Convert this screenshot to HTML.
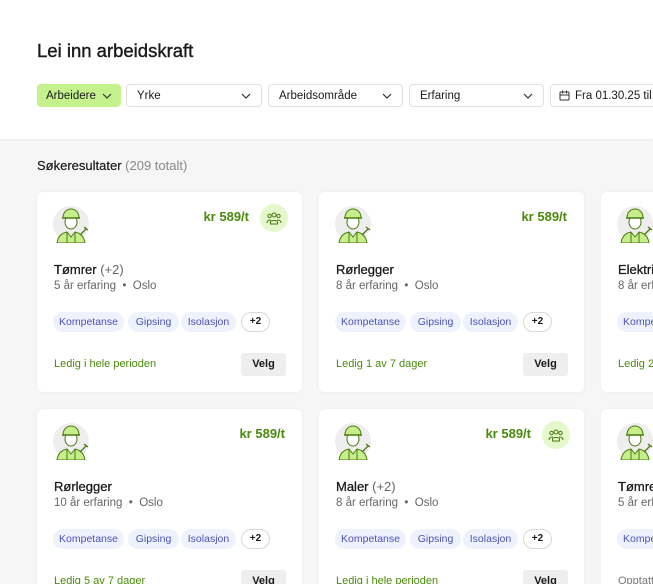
<!DOCTYPE html>
<html><head><meta charset="utf-8"><style>
*{box-sizing:border-box;margin:0;padding:0}
html,body{width:653px;height:584px;overflow:hidden}
body{background:#f6f6f6;font-family:"Liberation Sans",Arial,sans-serif;color:#1a1a1a;position:relative}
.hdr{position:absolute;left:0;top:0;width:653px;height:139px;background:#fff;box-shadow:0 1px 3px rgba(0,0,0,.06)}
h1{position:absolute;left:37px;top:40px;font-size:18.5px;font-weight:normal;-webkit-text-stroke:0.4px #1a1a1a}
.f{position:absolute;top:84px;height:23px;border:1px solid #e0e0e0;border-radius:4px;background:#fff;font-size:11.5px;line-height:22px;padding-left:10px}
.f svg.ch{position:absolute;right:10px;top:7px}
.res{position:absolute;left:37px;top:158px;font-size:13px;-webkit-text-stroke:0.2px #1a1a1a}
.res span{color:#888;-webkit-text-stroke:0}
.card{position:absolute;width:265px;height:200px;background:#fff;border-radius:6px;box-shadow:0 0 3px rgba(0,0,0,.05)}
.av{position:absolute;left:16px;top:13px}
.price{position:absolute;top:17px;font-size:13px;font-weight:bold;color:#4a8a0c}
.grp{position:absolute;left:223px;top:12px;width:28px;height:28px;border-radius:50%;background:#e4f8cc}
.grp svg{position:absolute;left:6px;top:7px}
.t{position:absolute;left:17px;top:70px;font-size:13px;-webkit-text-stroke:0.3px #1a1a1a}
.t span{color:#666;-webkit-text-stroke:0}
.s{position:absolute;left:17px;top:88px;font-size:11.5px;color:#666}
.tag{position:absolute;top:120px;height:20px;border-radius:10px;background:#eef2fd;color:#4b52b8;font-size:10.5px;line-height:20px;text-align:center}
.pl{position:absolute;left:204px;top:120px;width:29px;height:20px;border-radius:10px;border:1px solid #d8d8d8;font-size:10px;line-height:18px;text-align:center;font-weight:bold}
.l{position:absolute;left:17px;top:166px;font-size:11px;color:#4a8a0c}
.l.g{color:#777}
.v{position:absolute;left:204px;top:161px;width:45px;height:23px;border-radius:3px;background:#eeeeee;font-size:11px;font-weight:bold;line-height:23px;text-align:center}
</style></head><body>
<svg width="0" height="0" style="position:absolute"><defs>
<g id="av"><circle cx="18" cy="19" r="18" fill="#eeeeee"/>
<path d="M4 38c1-7 5-10 10-11l4 5 4-5c5 1 9 4 10 11z" fill="#c6ee8a" stroke="#4a7a10" stroke-width="1"/>
<path d="M14 27v11M22 27v11" stroke="#4a7a10" stroke-width="1"/>
<ellipse cx="18" cy="17" rx="6" ry="7" fill="#fff" stroke="#4a7a10" stroke-width="1"/>
<path d="M10 13c0-6 4-9 8-9s8 3 8 9z" fill="#c6ee8a" stroke="#4a7a10" stroke-width="1"/>
<path d="M9 13h18" stroke="#4a7a10" stroke-width="1.4"/>
<path d="M27 30l6-6M31 22l4 3" stroke="#4a7a10" stroke-width="1.3"/>
</g>
<g id="gp" fill="none" stroke="#4a7a10" stroke-width="1"><circle cx="8" cy="4" r="2"/><circle cx="3.5" cy="5" r="1.7"/><circle cx="12.5" cy="5" r="1.7"/><path d="M4.5 13v-2c0-2 7-2 7 0v2zM1 12c0-3 3-3 4-3M15 12c0-3-3-3-4-3"/></g>
</defs></svg>
<div class="hdr">
<h1>Lei inn arbeidskraft</h1>
<div class="f" style="left:37px;width:84px;background:#c5f28c;border-color:#c5f28c;padding-left:8px">Arbeidere<svg class="ch" style="right:8px" width="10" height="8"><path d="M1 2l4 4 4-4" fill="none" stroke="#333" stroke-width="1.2"/></svg></div>
<div class="f" style="left:126px;width:136px">Yrke<svg class="ch" width="10" height="8"><path d="M1 2l4 4 4-4" fill="none" stroke="#333" stroke-width="1.2"/></svg></div>
<div class="f" style="left:268px;width:135px">Arbeidsområde<svg class="ch" width="10" height="8"><path d="M1 2l4 4 4-4" fill="none" stroke="#333" stroke-width="1.2"/></svg></div>
<div class="f" style="left:409px;width:135px">Erfaring<svg class="ch" width="10" height="8"><path d="M1 2l4 4 4-4" fill="none" stroke="#333" stroke-width="1.2"/></svg></div>
<div class="f" style="left:550px;width:120px;padding-left:24px;white-space:nowrap"><svg style="position:absolute;left:8px;top:5px" width="11" height="11"><rect x="1" y="2" width="9" height="8" rx="1" fill="none" stroke="#333"/><path d="M1 5h9M3.5 0.5v3M7.5 0.5v3" stroke="#333"/></svg>Fra 01.30.25 til 01</div>
</div>
<div class="res">Søkeresultater <span>(209 totalt)</span></div>

<div class="card" style="left:37px;top:192px">
<svg class="av" width="36" height="38"><use href="#av"/></svg>
<div class="price" style="right:53px">kr 589/t</div><div class="grp"><svg width="16" height="14"><use href="#gp"/></svg></div>
<div class="t">Tømrer <span>(+2)</span></div><div class="s">5 år erfaring &nbsp;•&nbsp; Oslo</div>
<div class="tag" style="left:16px;width:71px">Kompetanse</div><div class="tag" style="left:91px;width:51px">Gipsing</div><div class="tag" style="left:144px;width:55px">Isolasjon</div><div class="pl">+2</div>
<div class="l">Ledig i hele perioden</div><div class="v">Velg</div></div>

<div class="card" style="left:319px;top:192px">
<svg class="av" width="36" height="38"><use href="#av"/></svg>
<div class="price" style="right:17px">kr 589/t</div>
<div class="t">Rørlegger</div><div class="s">8 år erfaring &nbsp;•&nbsp; Oslo</div>
<div class="tag" style="left:16px;width:71px">Kompetanse</div><div class="tag" style="left:91px;width:51px">Gipsing</div><div class="tag" style="left:144px;width:55px">Isolasjon</div><div class="pl">+2</div>
<div class="l">Ledig 1 av 7 dager</div><div class="v">Velg</div></div>

<div class="card" style="left:601px;top:192px">
<svg class="av" width="36" height="38"><use href="#av"/></svg>
<div class="t">Elektriker</div><div class="s">8 år erfaring</div>
<div class="tag" style="left:16px;width:71px">Kompetanse</div>
<div class="l">Ledig 2 av 7</div></div>

<div class="card" style="left:37px;top:409px">
<svg class="av" width="36" height="38"><use href="#av"/></svg>
<div class="price" style="right:17px">kr 589/t</div>
<div class="t">Rørlegger</div><div class="s">10 år erfaring &nbsp;•&nbsp; Oslo</div>
<div class="tag" style="left:16px;width:71px">Kompetanse</div><div class="tag" style="left:91px;width:51px">Gipsing</div><div class="tag" style="left:144px;width:55px">Isolasjon</div><div class="pl">+2</div>
<div class="l">Ledig 5 av 7 dager</div><div class="v">Velg</div></div>

<div class="card" style="left:319px;top:409px">
<svg class="av" width="36" height="38"><use href="#av"/></svg>
<div class="price" style="right:53px">kr 589/t</div><div class="grp"><svg width="16" height="14"><use href="#gp"/></svg></div>
<div class="t">Maler <span>(+2)</span></div><div class="s">8 år erfaring &nbsp;•&nbsp; Oslo</div>
<div class="tag" style="left:16px;width:71px">Kompetanse</div><div class="tag" style="left:91px;width:51px">Gipsing</div><div class="tag" style="left:144px;width:55px">Isolasjon</div><div class="pl">+2</div>
<div class="l">Ledig i hele perioden</div><div class="v">Velg</div></div>

<div class="card" style="left:601px;top:409px">
<svg class="av" width="36" height="38"><use href="#av"/></svg>
<div class="t">Tømrer</div><div class="s">5 år erfaring</div>
<div class="tag" style="left:16px;width:71px">Kompetanse</div>
<div class="l g">Opptatt</div></div>
</body></html>
